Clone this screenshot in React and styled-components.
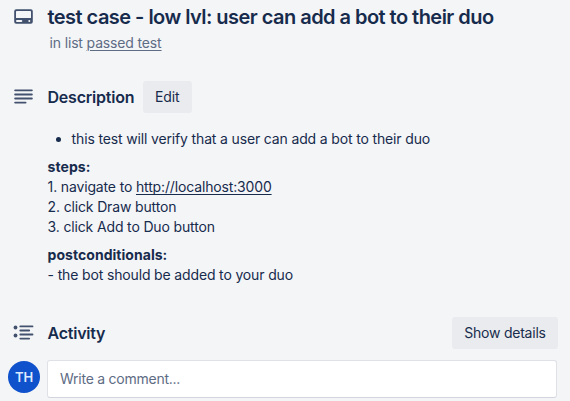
import React from "react";
import styled, { createGlobalStyle } from "styled-components";

const GlobalStyle = createGlobalStyle`
  *, *::before, *::after { box-sizing: border-box; }
  body {
    margin: 0;
    background: #f4f5f7;
    color: #172b4d;
    font: 400 14px/20px Inter, "Liberation Sans", sans-serif;
    overflow: hidden;
  }
`;

const Card = styled.main`
  display: flex;
  flex-direction: column;
  height: 401px;
  padding-right: 12px;
  white-space: nowrap;
`;

const Row = styled.div`
  display: grid;
  grid-template-columns: 47px 1fr;
  align-items: ${(p) => p.$align || "center"};
  margin-top: ${(p) => p.$top || 0}px;
`;

const Gutter = styled.div`
  display: flex;
  padding-left: ${(p) => p.$left ?? 12}px;
`;

const Icon = styled.svg`
  display: block;
  width: 24px;
  height: 24px;
  color: #42526e;
  overflow: visible;
`;

const Heading = styled.div`
  display: flex;
  align-items: center;
  justify-content: ${(p) => (p.$spread ? "space-between" : "flex-start")};
  gap: 8.5px;
  min-height: 32px;
`;

const Text = styled.span`
  letter-spacing: ${(p) => p.$track ?? -0.15}px;
`;

const Title = styled.h1`
  margin: 0 0 0 0.5px;
  font-size: 20px;
  font-weight: 600;
  line-height: 24px;
  letter-spacing: -0.535px;
`;

const SectionTitle = styled.h2`
  margin: 0 0 0 0.5px;
  font-size: 16px;
  font-weight: 600;
  line-height: 20px;
  letter-spacing: -0.22px;
`;

const ListName = styled.p`
  margin: 4px 0 0 49.5px;
  color: #5e6c84;
`;

const Link = styled.a`
  color: inherit;
  text-decoration: underline;
  text-underline-offset: 2px;
  text-decoration-thickness: 1px;
  text-decoration-skip-ink: ${(p) => p.$ink || "auto"};
`;

const Button = styled.button`
  height: 32px;
  padding: 0;
  border: 0;
  border-radius: 3px;
  background: #eaebee;
  color: #172b4d;
  font: inherit;
  width: ${(p) => p.$width}px;
`;

const Description = styled.section`
  margin: 16px 0 0 47.6px;
`;

const Bullets = styled.ul`
  margin: 0 0 8px;
  padding: 0 0 0 24px;
  list-style: none;
`;

const Bullet = styled.li`
  position: relative;
  &::before {
    content: "";
    position: absolute;
    left: -16px;
    top: 8px;
    width: 5px;
    height: 5px;
    border-radius: 50%;
    background: #172b4d;
  }
`;

const Paragraph = styled.p`
  margin: 0 0 8px;
`;

const Strong = styled.strong`
  font-weight: 700;
  letter-spacing: 0.04px;
`;

const Avatar = styled.div`
  display: grid;
  place-items: center;
  width: 32px;
  height: 32px;
  margin-top: 1px;
  border-radius: 50%;
  background: #0f52cc;
  color: #deebff;
  font-size: 13px;
  font-weight: 600;
  letter-spacing: -0.1px;
`;

const CommentBox = styled.div`
  height: 38px;
  margin-right: 1px;
  padding: 8px 12px;
  border: 1px solid #dfe1e6;
  border-bottom-color: #d2d5dd;
  border-radius: 3px;
  background: #fff;
  color: #5e6c84;
`;

function CardIcon() {
  return (
    <Icon viewBox="0 0 24 24" fill="currentColor">
      <path
        fillRule="evenodd"
        d="M4.200 4.200h14.600a2 2 0 0 1 2 2v10.600a2 2 0 0 1-2 2H4.200a2 2 0 0 1-2-2V6.200a2 2 0 0 1 2-2ZM4.700 6a.7.7 0 0 0-.7.7v6.300h15V6.700a.7.7 0 0 0-.7-.7ZM5 15a1 1 0 0 0 0 2h4.300a1 1 0 0 0 0-2ZM17.300 15a1 1 0 1 0 0 2a1 1 0 0 0 0-2Z"
      />
    </Icon>
  );
}

function LinesIcon() {
  return (
    <Icon viewBox="0 0 24 24" stroke="currentColor" strokeWidth="1.800" strokeLinecap="round">
      <path d="M3.100 5.300H19.900M3.100 9.500H19.900M3.100 13.500H19.900M3.100 17.600H13.600" />
    </Icon>
  );
}

function ActivityIcon() {
  return (
    <Icon viewBox="0 0 24 24" stroke="currentColor" strokeWidth="1.800" strokeLinecap="round">
      <path d="M8.300 5.400H20.500M8.300 9.500H17.200M8.300 13.500H20.500M8.300 17.600H17.200" />
      <g fill="currentColor" stroke="none">
        <circle cx="3.500" cy="6.500" r="1.900" />
        <circle cx="3.500" cy="14.500" r="1.900" />
      </g>
    </Icon>
  );
}

export default function App() {
  return (
    <>
      <GlobalStyle />
      <Card>
        <Row $top={5}>
          <Gutter><CardIcon /></Gutter>
          <Title>test case - low lvl: user can add a bot to their duo</Title>
        </Row>
        <ListName>
          <Text>in list <Link href="#list">passed test</Link></Text>
        </ListName>
        <Row $top={28}>
          <Gutter><LinesIcon /></Gutter>
          <Heading>
            <SectionTitle>Description</SectionTitle>
            <Button $width={49}><Text>Edit</Text></Button>
          </Heading>
        </Row>
        <Description>
          <Bullets>
            <Bullet><Text>this test will verify that a user can add a bot to their duo</Text></Bullet>
          </Bullets>
          <Paragraph>
            <Strong>steps:</Strong><br />
            <Text>1. navigate to <Link href="http://localhost:3000" $ink="none">http://localhost:3000</Link></Text><br />
            <Text>2. click Draw button</Text><br />
            <Text>3. click Add to Duo button</Text>
          </Paragraph>
          <Paragraph>
            <Strong>postconditionals:</Strong><br />
            <Text>- the bot should be added to your duo</Text>
          </Paragraph>
        </Description>
        <Row $top={24}>
          <Gutter><ActivityIcon /></Gutter>
          <Heading $spread>
            <SectionTitle>Activity</SectionTitle>
            <Button $width={106}><Text $track={-0.22}>Show details</Text></Button>
          </Heading>
        </Row>
        <Row $top={11} $align="start">
          <Gutter $left={8}><Avatar>TH</Avatar></Gutter>
          <CommentBox><Text $track={-0.25}>Write a comment...</Text></CommentBox>
        </Row>
      </Card>
    </>
  );
}
